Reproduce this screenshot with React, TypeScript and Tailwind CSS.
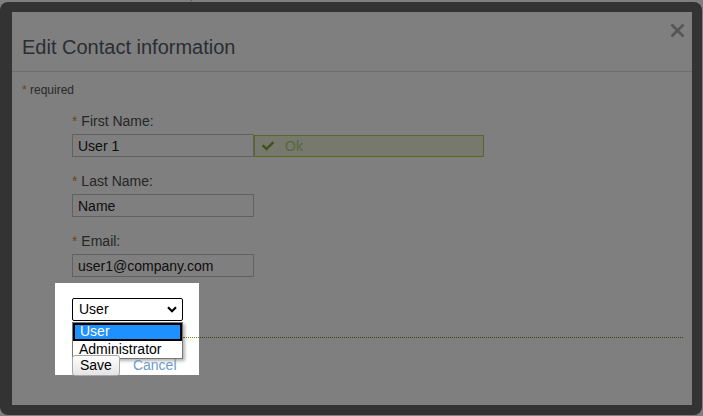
import { FaCheck } from "react-icons/fa";

type Field = {
  label: string;
  value: string;
  valid?: boolean;
};

const fields: Field[] = [
  { label: "First Name:", value: "User 1", valid: true },
  { label: "Last Name:", value: "Name" },
  { label: "Email:", value: "user1@company.com" }
];

function ChevronDown() {
  return (
    <svg width="10" height="7" viewBox="0 0 10 7" aria-hidden="true">
      <path d="M1 1.2 5 5.2 9 1.2" fill="none" stroke="#000" strokeWidth="2.2" />
    </svg>
  );
}

export default function App() {
  return (
    <div className="relative h-[416px] w-[703px] overflow-hidden bg-white font-['Liberation_Sans',Arial,sans-serif]">
      {/* page behind the dialog, only a sliver shows */}
      <div className="flex h-[2px] flex-col justify-end overflow-hidden pl-[23px] text-[13px] leading-[16px] text-[#a8a8a8]">
        <span>Global Dashboard &nbsp;›&nbsp; Subscription &nbsp;›&nbsp; Edit Profile</span>
      </div>

      <div className="h-[413px] w-[702px] rounded-[8px] bg-[#666] pb-[10px] pl-[12px] pr-[10px] pt-[10px]">
        <div className="flex h-full flex-col bg-white">
          <header className="flex h-[60px] items-start justify-between border-b border-[#dadada] pl-[10px] pr-[7px]">
            <h1 className="mt-[23px] text-[20px] leading-[24px] text-[#565b64]">
              Edit Contact information
            </h1>
            <button type="button" aria-label="Close" className="mt-[11px]">
              <svg width="15" height="15" viewBox="0 0 15 15" aria-hidden="true">
                <path d="M1.5 1.5 13.5 13.5M13.5 1.5 1.5 13.5" stroke="#aaa" strokeWidth="2.6" />
              </svg>
            </button>
          </header>

          <div className="pl-[10px] pt-[11px]">
            <p className="text-[12px] leading-[14px] text-[#555]">
              <span className="text-[#e07c52]">*</span> required
            </p>

            <form className="ml-[50px] mr-[9px] mt-[15px]">
              {fields.map((field) => (
                <div className="mb-[15px]" key={field.label}>
                  <label className="block text-[14px] leading-[18px] text-[#4c4c4c]">
                    <span className="text-[#dc8a4c]">*</span> {field.label}
                  </label>
                  <div className="mt-[4px] flex">
                    <input
                      readOnly
                      defaultValue={field.value}
                      className="h-[23px] w-[182px] border border-[#c2c2c2] px-[5px] text-[14px] text-[#202020] outline-none"
                    />
                    {field.valid && (
                      <div className="mt-[1px] flex h-[22px] w-[230px] items-center border border-[#b0d24c] bg-[#ecf2d8] pl-[7px] text-[14px] text-[#b4cc80]">
                        <FaCheck className="h-[12px] w-[12px] text-[#88a23e]" />
                        <span className="ml-[11px]">Ok</span>
                      </div>
                    )}
                  </div>
                </div>
              ))}

              <div className="relative mt-[21px]">
                {/* tour spotlight */}
                <div className="absolute left-[-17px] top-[-15px] z-20 h-[92px] w-[144px] bg-white">
                  <div className="absolute left-[128px] top-[54px] w-[16px] border-t border-dotted border-[#7a7a28]" />
                </div>

                <div className="relative z-30 flex h-[23px] w-[111px] items-center justify-between rounded-[2px] border border-black bg-white pl-[6px] pr-[5px] text-[14px] leading-[21px] text-black">
                  <span>User</span>
                  <ChevronDown />
                </div>

                <ul className="absolute left-0 top-[24px] z-30 w-[111px] border border-[#767676] bg-white text-[14px] text-black shadow-[2px_2px_3px_rgba(0,0,0,0.3)]">
                  <li className="h-[18px] border-2 border-black bg-[#1e90ff] pl-[5px] leading-[13px] text-white">
                    User
                  </li>
                  <li className="h-[17px] pl-[6px] leading-[17px]">Administrator</li>
                </ul>

                <hr className="mt-[16px] border-0 border-t border-dotted border-[#7a7a28]" />

                <div className="mt-[17px] flex items-center">
                  <button
                    type="button"
                    className="relative z-30 h-[21px] rounded-[3px] border border-[#a6a6a6] bg-gradient-to-b from-white to-[#e4e4e4] px-[7px] text-[14px] leading-[19px] text-black"
                  >
                    Save
                  </button>
                  <a className="relative z-30 ml-[13px] text-[14px] leading-[19px] text-[#6e9bcb]">
                    Cancel
                  </a>
                </div>
              </div>
            </form>
          </div>
        </div>
      </div>

      <div className="absolute inset-0 z-10 bg-black/50" />
    </div>
  );
}
